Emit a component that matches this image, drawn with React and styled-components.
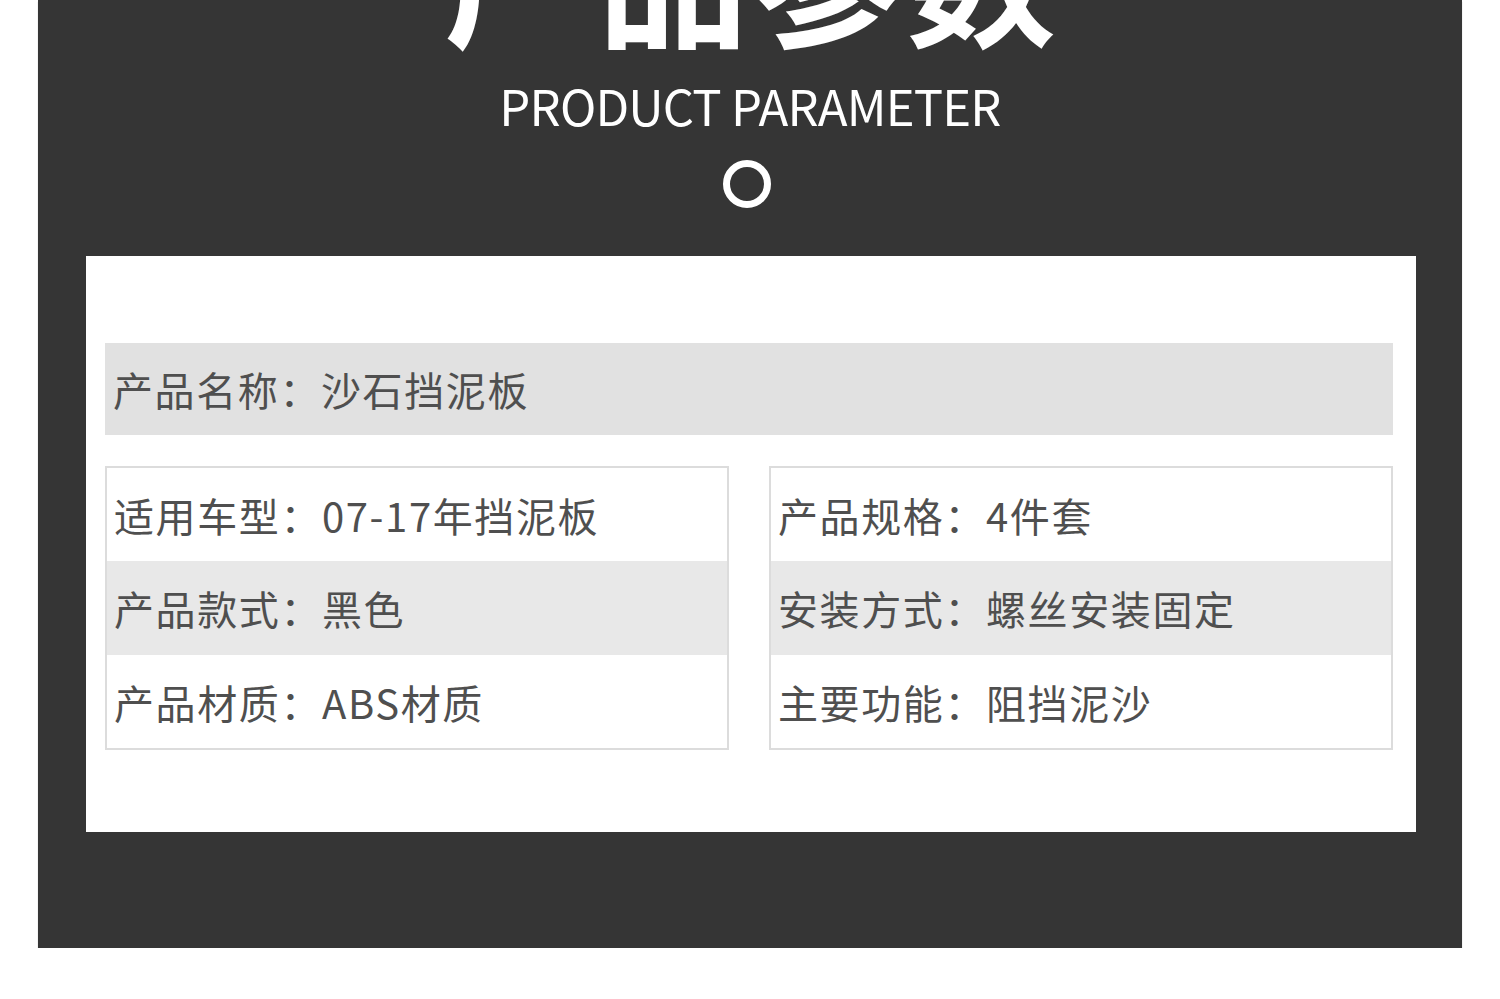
import React from 'react';
import styled, { createGlobalStyle } from 'styled-components';

const Global = createGlobalStyle`
  html, body {
    margin: 0;
    padding: 0;
    background: #ffffff;
  }
  body {
    font-family: "Noto Sans CJK SC", "Noto Sans", sans-serif;
  }
`;

const Panel = styled.section`
  width: 1424px;
  height: 948px;
  margin: 0 0 0 38px;
  background: #353535;
  overflow: hidden;
  display: flex;
  flex-direction: column;
  align-items: center;
  box-shadow: 0 2px 1px rgba(0, 0, 0, 0.25);
`;

const BigTitle = styled.h1`
  margin: -104px 0 0 4px;
  font-size: 150px;
  line-height: 1;
  font-weight: 700;
  color: #ffffff;
  letter-spacing: 4px;
`;

const SubTitle = styled.h2`
  margin: 34px 0 0 0;
  font-family: "Noto Sans CJK SC", "Noto Sans", sans-serif;
  font-size: 49px;
  line-height: 1;
  font-weight: 400;
  color: #ffffff;
  letter-spacing: -0.8px;
`;

const Ring = styled.div`
  width: 34px;
  height: 34px;
  margin: 31px 6px 0 0;
  border: 7px solid #ffffff;
  border-radius: 50%;
`;

const Card = styled.div`
  width: 1330px;
  height: 576px;
  margin: 48px 0 0 2px;
  background: #ffffff;
  padding: 87px 23px 0 19px;
  box-sizing: border-box;
`;

const NameBar = styled.div`
  height: 92px;
  background: #e1e1e1;
  display: flex;
  align-items: center;
  padding-left: 8px;
`;

const Label = styled.span`
  font-size: 40px;
  color: #4f4f4f;
  letter-spacing: 1.6px;
  white-space: nowrap;
`;

const Tables = styled.div`
  display: grid;
  grid-template-columns: 624px 624px;
  justify-content: space-between;
  margin-top: 31px;
`;

const Table = styled.div`
  border: 2px solid #dcdcdc;
  display: flex;
  flex-direction: column;
`;

const Row = styled.div`
  height: ${(p) => (p.$mid ? 94 : 93)}px;
  background: ${(p) => (p.$shade ? '#e8e8e8' : '#ffffff')};
  display: flex;
  align-items: center;
  padding-left: 7px;
`;

const left = [
  '适用车型：07-17年挡泥板',
  '产品款式：黑色',
  '产品材质：ABS材质',
];

const right = [
  '产品规格：4件套',
  '安装方式：螺丝安装固定',
  '主要功能：阻挡泥沙',
];

function ParamTable({ rows }) {
  return (
    <Table>
      {rows.map((text, i) => (
        <Row key={text} $shade={i === 1} $mid={i === 1}>
          <Label>{text}</Label>
        </Row>
      ))}
    </Table>
  );
}

export default function App() {
  return (
    <>
      <Global />
      <Panel>
        <BigTitle>产品参数</BigTitle>
        <SubTitle>PRODUCT PARAMETER</SubTitle>
        <Ring />
        <Card>
          <NameBar>
            <Label>产品名称：沙石挡泥板</Label>
          </NameBar>
          <Tables>
            <ParamTable rows={left} />
            <ParamTable rows={right} />
          </Tables>
        </Card>
      </Panel>
    </>
  );
}
